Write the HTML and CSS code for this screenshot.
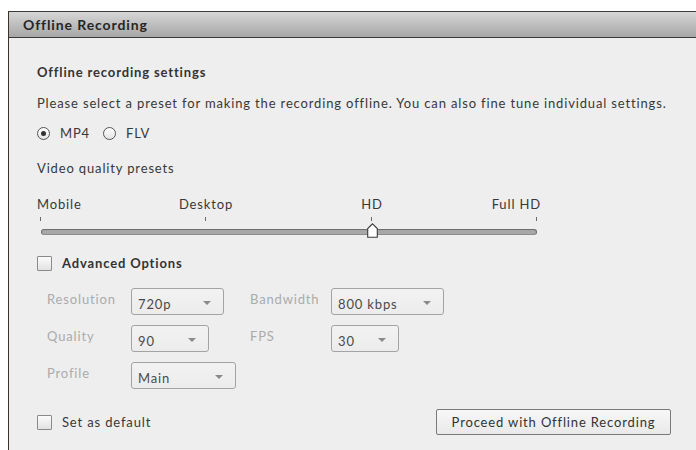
FILE: index.html
```html
<!DOCTYPE html>
<html lang="en">
<head>
<meta charset="utf-8">
<title>Offline Recording</title>
<link rel="stylesheet" href="styles.css">
</head>
<body>
<div class="top-strip"></div>
<section class="dialog">
  <header class="dialog-title">Offline Recording</header>
  <div class="dialog-body">
    <h2 class="section-title">Offline recording settings</h2>
    <p class="intro">Please select a preset for making the recording offline. You can also fine tune individual settings.</p>

    <div class="format-row">
      <label class="radio is-checked"><span class="radio-dot"></span>MP4</label>
      <label class="radio"><span class="radio-dot"></span>FLV</label>
    </div>

    <p class="presets-label">Video quality presets</p>

    <div class="slider">
      <div class="slider-labels">
        <span class="stop stop-first">Mobile</span>
        <span class="stop stop-second">Desktop</span>
        <span class="stop stop-third">HD</span>
        <span class="stop stop-last">Full HD</span>
      </div>
      <div class="slider-ticks">
        <i class="tick"></i><i class="tick"></i><i class="tick"></i><i class="tick"></i>
      </div>
      <div class="slider-track">
        <svg class="slider-thumb" width="11" height="15" viewBox="0 0 11 15">
          <path d="M5.5 0.8 L10.3 5.6 L10.3 14.3 L0.7 14.3 L0.7 5.6 Z" fill="#ffffff" stroke="#3a3a3a" stroke-width="1.1" stroke-linejoin="miter"/>
        </svg>
      </div>
    </div>

    <label class="check check-bold"><span class="check-box"></span>Advanced Options</label>

    <div class="adv-grid">
      <span class="adv-label">Resolution</span>
      <span class="select select-res">720p<i class="caret"></i></span>
      <span class="adv-label">Bandwidth</span>
      <span class="select select-bw">800 kbps<i class="caret"></i></span>

      <span class="adv-label">Quality</span>
      <span class="select select-q">90<i class="caret"></i></span>
      <span class="adv-label">FPS</span>
      <span class="select select-fps">30<i class="caret"></i></span>

      <span class="adv-label">Profile</span>
      <span class="select select-prof">Main<i class="caret"></i></span>
    </div>

    <div class="footer">
      <label class="check"><span class="check-box"></span>Set as default</label>
      <button class="proceed" type="button">Proceed with Offline Recording</button>
    </div>
  </div>
</section>
</body>
</html>
```

FILE: styles.css
```css
* { box-sizing: border-box; }

html, body {
  margin: 0;
  height: 100%;
  background: #ffffff;
}

body {
  font-family: Lato, "Open Sans", sans-serif;
  font-size: 13px;
  letter-spacing: 0.85px;
  color: #383838;
  overflow: hidden;
}

.top-strip {
  height: 11px;
  background: #ffffff;
}

.dialog {
  margin-left: 8px;
  height: 439px;
  border-left: 1px solid #3b3328;
  background: #eeeeee;
  display: flex;
  flex-direction: column;
}

.dialog-title {
  height: 27px;
  border-top: 1px solid #3a3a3a;
  border-bottom: 1px solid #3a3a3a;
  background: linear-gradient(#d6d6d6, #a6a6a6);
  padding: 3px 0 0 14px;
  font-weight: bold;
  font-size: 14px;
  letter-spacing: 0.9px;
  line-height: 19px;
  color: #262626;
}

.dialog-body {
  padding: 26px 0 0 28px;
  flex: 1;
}

.section-title {
  margin: 0;
  font-size: 13px;
  line-height: 16px;
  font-weight: bold;
  color: #333333;
}

.intro {
  margin: 15px 0 0;
  line-height: 16px;
}

.format-row {
  margin-top: 14px;
  display: flex;
  align-items: center;
  height: 16px;
  gap: 13px;
}

.radio {
  display: flex;
  align-items: center;
  gap: 10px;
  line-height: 16px;
}

.radio-dot {
  width: 13px;
  height: 13px;
  border-radius: 50%;
  border: 1px solid #555555;
  background: linear-gradient(#ffffff, #e4e4e4);
  display: grid;
  place-items: center;
}

.radio.is-checked .radio-dot::after {
  content: "";
  width: 5px;
  height: 5px;
  border-radius: 50%;
  background: #333333;
}

.presets-label {
  margin: 19px 0 0;
  line-height: 16px;
}

.slider {
  margin-top: 20px;
  width: 504px;
}

.slider-labels {
  position: relative;
  height: 16px;
  line-height: 16px;
}

.stop {
  position: absolute;
  top: 0;
  white-space: nowrap;
}

.stop-first { left: 0; }
.stop-second { left: 169px; transform: translateX(-50%); }
.stop-third { left: 335px; transform: translateX(-50%); }
.stop-last { right: 0; }

.slider-ticks {
  margin-top: 5px;
  height: 4px;
  display: flex;
  justify-content: space-between;
  padding: 0 4px 0 3px;
}

.tick {
  width: 1px;
  height: 4px;
  background: #6a6a6a;
}

.slider-track {
  position: relative;
  margin: 8px 4px 0 4px;
  height: 6px;
  border-radius: 3px;
  border: 1px solid #6e6e6e;
  border-bottom-color: #8d8d8d;
  background: #a7a7a7;
}

.slider-thumb {
  position: absolute;
  left: 325px;
  top: -7px;
}

.check {
  display: flex;
  align-items: center;
  gap: 10px;
  line-height: 16px;
}

.check-bold {
  margin-top: 20px;
  font-weight: bold;
  color: #333333;
}

.check-box {
  width: 15px;
  height: 15px;
  border: 1px solid #8a8a8a;
  border-radius: 1px;
  background: linear-gradient(#fbfbfb, #e2e2e2);
}

.adv-grid {
  margin: 17px 0 0 10px;
  display: grid;
  grid-template-columns: 84px 119px 81px auto;
  justify-content: start;
  align-items: start;
  row-gap: 10px;
}

.adv-label {
  color: #ababab;
  line-height: 16px;
  padding-top: 3px;
}

.select {
  position: relative;
  height: 27px;
  border: 1px solid #a3a3a3;
  border-radius: 3px;
  background: linear-gradient(#f2f2f2, #ececec);
  color: #4a4a4a;
  padding: 7px 0 0 6px;
  line-height: 16px;
  justify-self: start;
}

.select-res { width: 93px; }
.select-bw { width: 113px; }
.select-q { width: 78px; }
.select-fps { width: 68px; }
.select-prof { width: 105px; }

.caret {
  position: absolute;
  right: 12px;
  top: 12px;
  width: 0;
  height: 0;
  border-left: 4px solid transparent;
  border-right: 4px solid transparent;
  border-top: 4px solid #8a8a8a;
}

.footer {
  margin: 20px 25px 0 0;
  display: flex;
  align-items: center;
  justify-content: space-between;
}

.proceed {
  width: 235px;
  height: 26px;
  border: 1px solid #7a7a7a;
  border-radius: 2px;
  background: linear-gradient(#f7f7f7, #e9e9e9);
  font-family: inherit;
  font-size: 13px;
  letter-spacing: 0.85px;
  color: #333333;
  padding: 0;
}
```
